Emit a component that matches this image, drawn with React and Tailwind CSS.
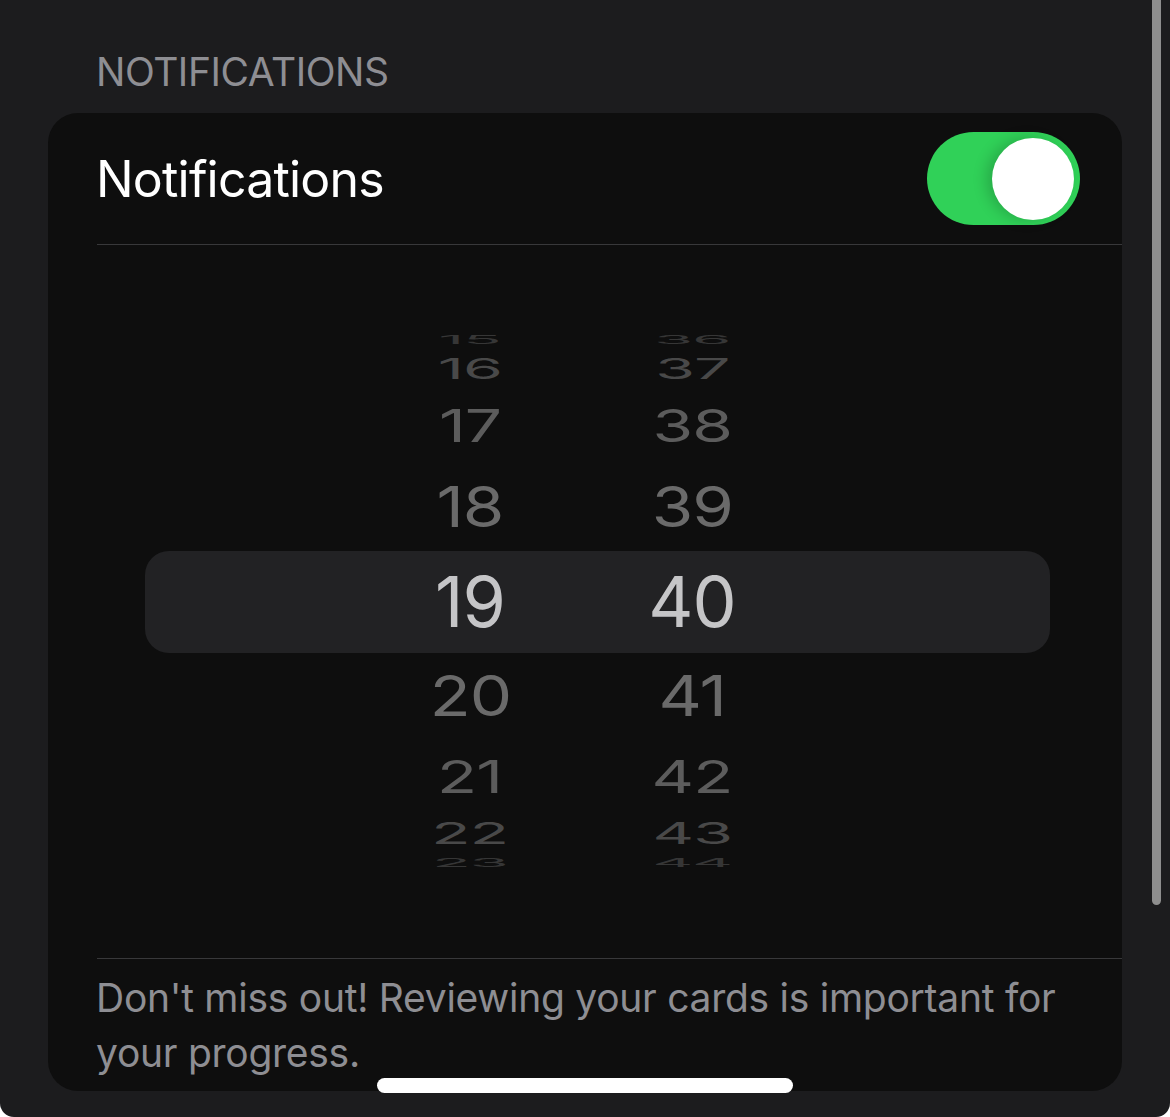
import React from "react";

const rows = [
  { h: "15", m: "36", row: "h-[18.5px]", text: "scale-y-[0.16] scale-x-[0.9] text-[#363636]" },
  { h: "16", m: "37", row: "h-[39.5px]", text: "scale-y-[0.41] scale-x-[0.92] text-[#494949]" },
  { h: "17", m: "38", row: "h-[75.5px]", text: "scale-y-[0.65] scale-x-[0.94] text-[#5c5c5c]" },
  { h: "18", m: "39", row: "h-[86.5px]", text: "scale-y-[0.8] scale-x-[0.96] text-[#6a6a6a]" },
  { h: "19", m: "40", row: "h-[102px] bg-[#222224] rounded-[24px]", text: "text-[#c5c5c7]" },
  { h: "20", m: "41", row: "h-[86.5px]", text: "scale-y-[0.81] scale-x-[0.96] text-[#6a6a6a]" },
  { h: "21", m: "42", row: "h-[75.5px]", text: "scale-y-[0.64] scale-x-[0.94] text-[#5c5c5c]" },
  { h: "22", m: "43", row: "h-[39.5px]", text: "scale-y-[0.42] scale-x-[0.92] text-[#494949]" },
  { h: "23", m: "44", row: "h-[18.5px]", text: "scale-y-[0.17] scale-x-[0.9] text-[#363636]" },
];

function Toggle() {
  return (
    <div className="w-[153px] h-[93px] rounded-full bg-[#30d158] flex items-center justify-end pr-[6px]">
      <div className="w-[82px] h-[82px] rounded-full bg-white shadow-[-6px_0_14px_rgba(0,0,0,0.18)]" />
    </div>
  );
}

function TimePicker() {
  return (
    <div className="h-[713px] flex flex-col justify-center">
      <div className="flex flex-col ml-[97px] mr-[72px]">
        {rows.map((r) => (
          <div key={r.h} className={`flex items-center pl-[265px] ${r.row}`}>
            <div className="w-[120px] flex justify-center">
              <span className={`block text-[70px] leading-none tracking-[-1px] ${r.text}`}>{r.h}</span>
            </div>
            <div className="w-[102px]" />
            <div className="w-[120px] flex justify-center">
              <span className={`block text-[70px] leading-none tracking-[-1px] ${r.text}`}>{r.m}</span>
            </div>
          </div>
        ))}
      </div>
    </div>
  );
}

export default function App() {
  return (
    <div className="relative w-full h-[1117px] bg-[#1c1c1e] rounded-b-[14px] overflow-hidden font-['Inter','Noto_Sans',sans-serif] pt-[52px] px-[48px]">
      {/* SECTION HEADER */}
      <div className="pl-[48px] text-[39px] leading-[39px] tracking-[-0.45px] text-[#8e8e93] mb-[22px]">NOTIFICATIONS</div>

      {/* CARD */}
      <div className="bg-[#0e0e0e] rounded-[30px]">
        <div className="h-[131px] flex items-center justify-between pl-[48px] pr-[42px]">
          <span className="text-[50px] leading-[50px] tracking-[-0.8px] text-white">Notifications</span>
          <Toggle />
        </div>
        <div className="ml-[49px] h-px bg-[#38383a]" />

        <TimePicker />

        <div className="ml-[49px] h-px bg-[#38383a]" />
        <p className="pl-[48px] pr-[40px] pt-[11px] pb-[11px] text-[39px] leading-[55px] tracking-[-0.27px] text-[#8e8e93]">
          Don't miss out! Reviewing your cards is important for your progress.
        </p>
      </div>

      {/* scroll indicator */}
      <div className="absolute top-0 left-[1152px] w-[9px] h-[905px] rounded-b-full bg-[#8e8e8e]" />
      {/* home indicator */}
      <div className="absolute bottom-[24px] left-[377px] w-[416px] h-[15px] rounded-full bg-white" />
    </div>
  );
}
